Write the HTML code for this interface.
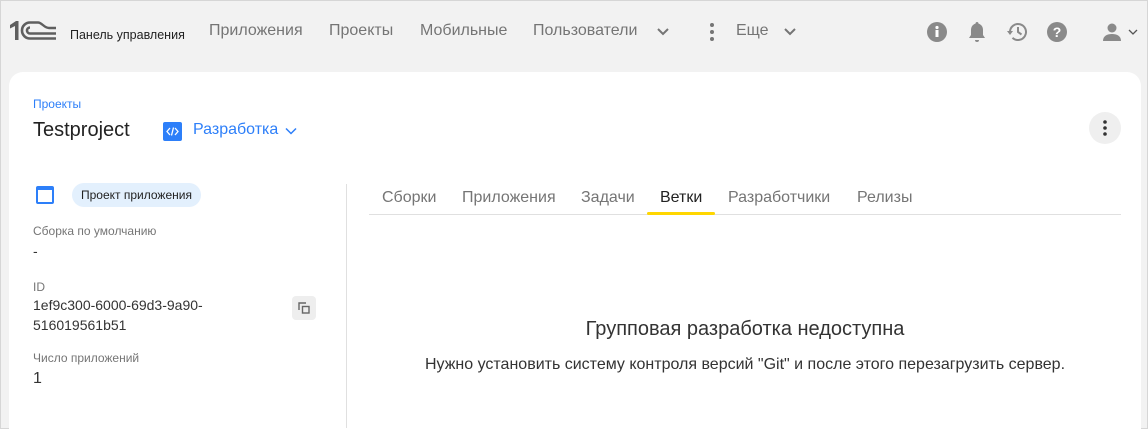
<!DOCTYPE html>
<html><head><meta charset="utf-8"><style>
*{margin:0;padding:0;box-sizing:border-box}
html,body{width:1148px;height:429px;overflow:hidden}
body{background:#f2f2f2;font-family:"Liberation Sans",sans-serif;position:relative;border:1px solid #d6d6d6}
.a{position:absolute;white-space:nowrap}
.nav{font-size:16px;color:#757575;top:21px}
.card{position:absolute;left:8px;top:71px;width:1132px;height:358px;background:#fff;border-radius:14px 14px 0 0}
.lbl{font-size:12px;color:#757575}
.val{font-size:14px;color:#333}
.tab{font-size:16px;color:#757575;top:188px}
</style></head><body>
<svg class="a" style="left:8px;top:18px" width="48" height="24" viewBox="0 0 48 24">
<path d="M1 6 L7 2 H9.5 V21 H6 V7 L1 9.5Z" fill="#5f5f5f"/>
<path d="M21 3.5 A8 8 0 1 0 21 19.5 H47" fill="none" stroke="#5f5f5f" stroke-width="2.6"/>
<path d="M21 8.5 A3 3 0 1 0 21 14.5 H47" fill="none" stroke="#5f5f5f" stroke-width="2.6"/>
<path d="M21 3.5 H29 C33 3.5 35 9 40 9 H47" fill="none" stroke="#5f5f5f" stroke-width="2.4"/>
</svg>
<div class="a" style="left:69px;top:27px;font-size:12.5px;color:#222">Панель управления</div>
<div class="a nav" style="left:208px">Приложения</div>
<div class="a nav" style="left:328px">Проекты</div>
<div class="a nav" style="left:419px">Мобильные</div>
<div class="a nav" style="left:532px">Пользователи</div>
<svg class="a" style="left:655px;top:24px" width="14" height="14"><path d="M2 4l5 5 5-5" fill="none" stroke="#757575" stroke-width="2"/></svg>
<svg class="a" style="left:706px;top:20px" width="10" height="22"><circle cx="5" cy="4" r="2" fill="#757575"/><circle cx="5" cy="11" r="2" fill="#757575"/><circle cx="5" cy="18" r="2" fill="#757575"/></svg>
<div class="a nav" style="left:735px">Еще</div>
<svg class="a" style="left:782px;top:24px" width="14" height="14"><path d="M2 4l5 5 5-5" fill="none" stroke="#757575" stroke-width="2"/></svg>
<svg class="a" style="left:925px;top:20px" width="22" height="22"><circle cx="11" cy="11" r="10" fill="#8a8a8a"/><rect x="9.5" y="9" width="3" height="7" fill="#fff"/><circle cx="11" cy="6.5" r="1.6" fill="#fff"/></svg>
<svg class="a" style="left:966px;top:20px" width="20" height="22"><path d="M10 1c1 0 1.5.8 1.5 1.6C14.5 3.5 16 6 16 9v5l2 3H2l2-3V9c0-3 1.5-5.5 4.5-6.4C8.5 1.8 9 1 10 1z" fill="#8a8a8a"/><path d="M8 19h4a2 2 0 0 1-4 0z" fill="#8a8a8a"/></svg>
<svg class="a" style="left:1005px;top:20px" width="22" height="22"><path d="M4 11a8 8 0 1 1 2.5 5.8" fill="none" stroke="#8a8a8a" stroke-width="2"/><path d="M1 10h6l-3 4z" fill="#8a8a8a"/><path d="M12 6v5l3.5 2.5" fill="none" stroke="#8a8a8a" stroke-width="2"/></svg>
<svg class="a" style="left:1045px;top:20px" width="22" height="22"><circle cx="11" cy="11" r="10" fill="#8a8a8a"/><text x="11" y="16" text-anchor="middle" font-family="Liberation Sans" font-weight="bold" font-size="14" fill="#fff">?</text></svg>
<svg class="a" style="left:1101px;top:21px" width="22" height="20"><circle cx="10" cy="6" r="4.5" fill="#8a8a8a"/><path d="M1 19c0-5 4-7 9-7s9 2 9 7z" fill="#8a8a8a"/></svg>
<svg class="a" style="left:1127px;top:27px" width="10" height="8"><path d="M1 2l4 4 4-4" fill="none" stroke="#555" stroke-width="1.3"/></svg>

<div class="card"></div>
<div class="a" style="left:32px;top:96px;font-size:12px;color:#2d7ff9">Проекты</div>
<div class="a" style="left:32px;top:118px;font-size:20px;color:#222">Testproject</div>
<svg class="a" style="left:162px;top:121px" width="19" height="19"><rect width="19" height="19" rx="2" fill="#2d7ff9"/><path d="M7 6l-3 3.5 3 3.5M12 6l3 3.5-3 3.5M10.5 5.5l-2 8" fill="none" stroke="#fff" stroke-width="1.3"/></svg>
<div class="a" style="left:192px;top:120px;font-size:16px;color:#2d7ff9">Разработка</div>
<svg class="a" style="left:284px;top:125px" width="12" height="10"><path d="M1 2.5l5 5 5-5" fill="none" stroke="#2d7ff9" stroke-width="1.5"/></svg>
<div class="a" style="left:1088px;top:111px;width:32px;height:32px;border-radius:50%;background:#efefef"></div>
<svg class="a" style="left:1101px;top:118px" width="6" height="18"><circle cx="3" cy="3" r="1.8" fill="#333"/><circle cx="3" cy="9" r="1.8" fill="#333"/><circle cx="3" cy="15" r="1.8" fill="#333"/></svg>

<div class="a" style="left:35px;top:185px;width:18px;height:18px;border:2.5px solid #2d7ff9;border-top-width:4px;border-radius:2px"></div>
<div class="a" style="left:71px;top:182px;height:24px;padding:0 9px;border-radius:12px;background:#e3f0fd;font-size:12px;color:#222;line-height:24px">Проект приложения</div>
<div class="a lbl" style="left:32px;top:223px">Сборка по умолчанию</div>
<div class="a val" style="left:32px;top:242px">-</div>
<div class="a lbl" style="left:32px;top:279px">ID</div>
<div class="a val" style="left:32px;top:296px">1ef9c300-6000-69d3-9a90-</div>
<div class="a val" style="left:32px;top:316px">516019561b51</div>
<div class="a" style="left:291px;top:295px;width:24px;height:24px;border-radius:4px;background:#eee"></div>
<svg class="a" style="left:296px;top:300px" width="14" height="14"><path d="M2 9V2h7" fill="none" stroke="#666" stroke-width="1.4"/><rect x="5.5" y="5.5" width="6.5" height="6.5" fill="none" stroke="#666" stroke-width="1.4"/></svg>
<div class="a lbl" style="left:32px;top:350px">Число приложений</div>
<div class="a" style="left:32px;top:369px;font-size:16px;color:#333">1</div>
<div class="a" style="left:345px;top:183px;width:1px;height:244px;background:#e0e0e0"></div>

<div class="a tab" style="left:381px">Сборки</div>
<div class="a tab" style="left:461px">Приложения</div>
<div class="a tab" style="left:580px">Задачи</div>
<div class="a tab" style="left:659px;color:#222">Ветки</div>
<div class="a tab" style="left:727px">Разработчики</div>
<div class="a tab" style="left:856px">Релизы</div>
<div class="a" style="left:368px;top:213px;width:752px;height:1px;background:#e0e0e0"></div>
<div class="a" style="left:646px;top:211px;width:68px;height:3px;border-radius:2px;background:#ffd600"></div>
<div class="a" style="left:368px;top:317px;width:752px;text-align:center;font-size:20px;color:#333">Групповая разработка недоступна</div>
<div class="a" style="left:368px;top:355px;width:752px;text-align:center;font-size:16px;color:#333">Нужно установить систему контроля версий "Git" и после этого перезагрузить сервер.</div>
</body></html>
